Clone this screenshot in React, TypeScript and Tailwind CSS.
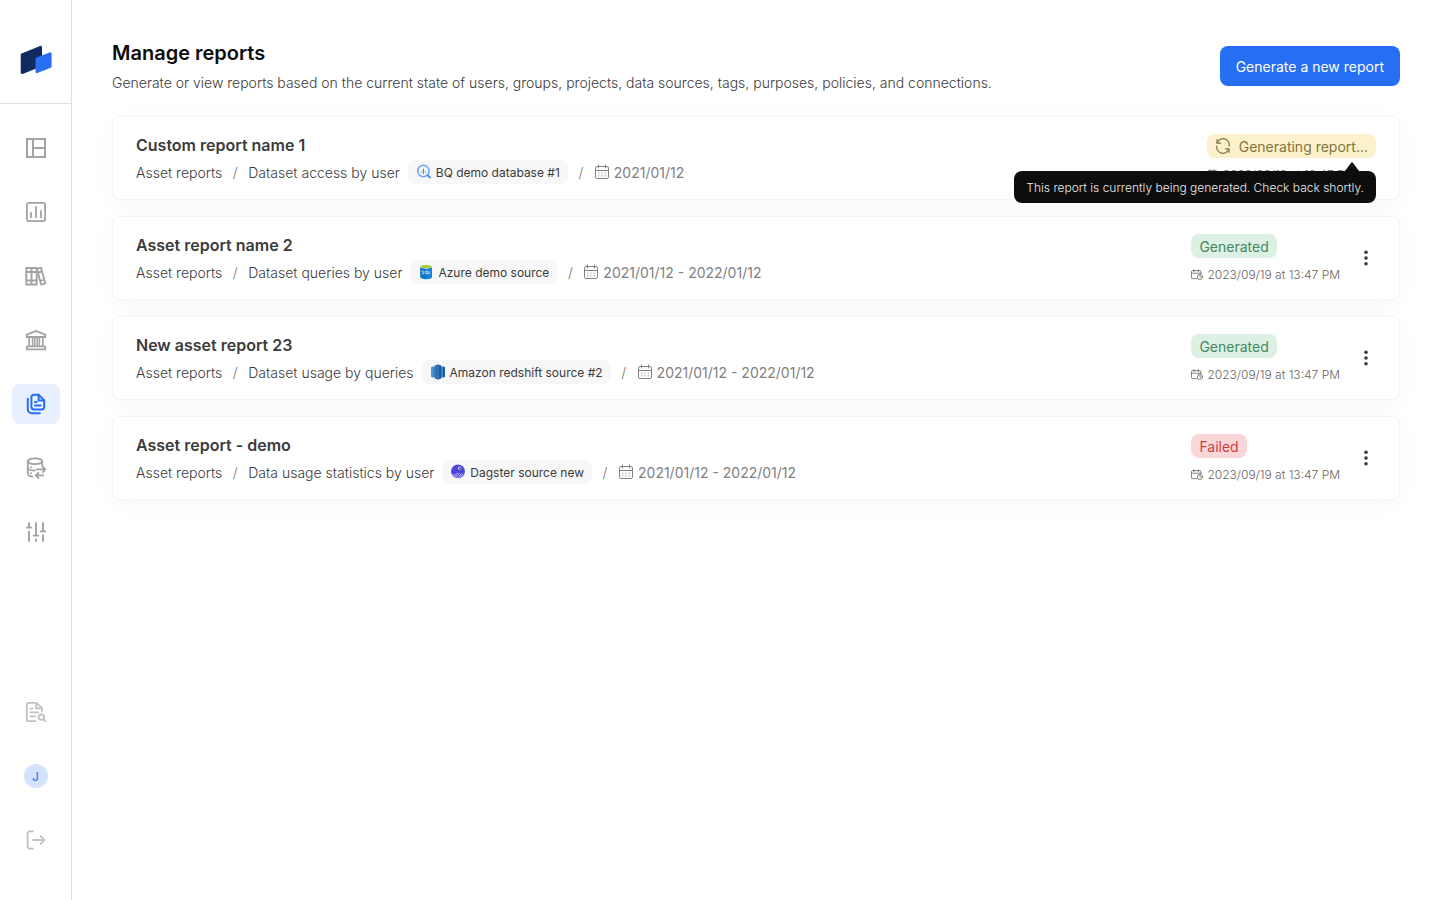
import type { ReactNode } from "react";

type IconProps = { className?: string };

function Svg({ className = "size-6", children, stroke = 1.6 }: { className?: string; children: ReactNode; stroke?: number }) {
  return (
    <svg
      className={className}
      viewBox="0 0 24 24"
      fill="none"
      stroke="currentColor"
      strokeWidth={stroke}
      strokeLinecap="round"
      strokeLinejoin="round"
      aria-hidden="true"
    >
      {children}
    </svg>
  );
}

const DashboardIcon = () => (
  <Svg stroke={2}>
    <path strokeLinejoin="miter" strokeLinecap="butt" d="M3 3h18v18H3zM9 3v18M9 12h12" />
  </Svg>
);

const ChartIcon = () => (
  <Svg stroke={1.8}>
    <rect x="2.9" y="2.9" width="18.2" height="18.2" rx="2" />
    <path d="M7 13v4.2M12 6.8v10.4M17 10.8v6.4" />
  </Svg>
);

const BooksIcon = () => (
  <Svg stroke={1.9}>
    <path d="M2.3 4h10.4v16.5H2.3zM7.5 4v16.5M2.3 8h10.4M2.3 16.5h10.4" />
    <path d="M12.9 4.8 17 3.7l4.4 15.7-4.3 1.2zM13.7 8.6l4.4-1.1M16 16.8l4.4-1.1" />
  </Svg>
);

const BankIcon = () => (
  <Svg stroke={1.8}>
    <path strokeLinejoin="miter" d="M2.8 9V6.6L12 3l9.2 3.6V9zM2.8 18.4h18.4v2.9H2.8z" />
    <path strokeLinecap="butt" strokeWidth="1.6" d="M5.2 9v9.4M8.6 9v9.4M10.8 9v9.4M13.2 9v9.4M15.4 9v9.4M18.8 9v9.4" />
  </Svg>
);

const ReportsIcon = () => (
  <Svg stroke={2}>
    <path d="M14.6 2.8H10a2.6 2.6 0 0 0-2.6 2.6v9.4a2.6 2.6 0 0 0 2.6 2.6h7.6a2.6 2.6 0 0 0 2.6-2.6V8.4z" />
    <path d="M14.6 3v5.4h5.4M11 10h1.6M11 13.4h5.6" />
    <path d="M3.8 6.8v10.4a4 4 0 0 0 4 4h8" />
  </Svg>
);

const DatabaseIcon = () => (
  <Svg stroke={1.8}>
    <ellipse cx="11" cy="5.2" rx="7.2" ry="2.9" />
    <path d="M3.8 5.2v12.6c0 1.5 1.9 2.4 4.4 2.8M18.2 5.2v4.6M3.8 11.6c0 1.6 2.8 2.9 6.6 2.9" />
    <path d="M7 11.2h.1M7 17.2h.1" />
    <path d="M12.4 13.4h9M18.8 10.8l2.6 2.6-2.6 2.6M19.4 19.4h-7.6M14.4 16.8l-2.6 2.6 2.6 2.6" />
  </Svg>
);

const SlidersIcon = () => (
  <Svg stroke={1.9}>
    <path d="M5 3v4.4M2.8 7.6h4.6M5 11.4V21M12 3v12.4M9.6 15.6h4.8M12 19.2V21M19 3v8.2M16.6 11.4h4.8M19 15.2V21" />
  </Svg>
);

const AuditIcon = () => (
  <Svg stroke={1.8}>
    <path d="M11.4 21.2H4.6a1.8 1.8 0 0 1-1.8-1.8V4.6a1.8 1.8 0 0 1 1.8-1.8h8L18 8.2v3.2" />
    <path d="M12.2 3v5.4h5.4M6.4 8.6h2.2M6.4 12.4h7.8M6.4 16.4h5" />
    <circle cx="17.4" cy="17.2" r="2.7" />
    <path d="m19.4 19.2 2 2" />
  </Svg>
);

const LogoutIcon = () => (
  <Svg stroke={1.8}>
    <path d="M9 3.4H5.4a1.8 1.8 0 0 0-1.8 1.8v13.6a1.8 1.8 0 0 0 1.8 1.8H9M9 12h11.4M16.6 8.2l3.8 3.8-3.8 3.8" />
  </Svg>
);

const Logo = () => (
  <svg className="h-8 w-8" viewBox="0 0 32 32" strokeLinejoin="round" strokeWidth="2.8" aria-hidden="true">
    <path d="M2.1 10.9 20.6 3.3v18L2.1 28.6z" fill="#0f2b60" stroke="#0f2b60" />
    <path d="M16.9 14.9 30.2 9.7v12.8l-13.3 5.2z" fill="#266ff3" stroke="#266ff3" />
  </svg>
);

const CalendarIcon = () => (
  <svg className="size-4 shrink-0" viewBox="0 0 16 16" fill="none" stroke="currentColor" strokeLinecap="round" aria-hidden="true">
    <rect x="1.5" y="2.5" width="13" height="12" rx="1.6" />
    <path d="M1.5 6.5h13M4.5 1v3M11.5 1v3" />
    <path strokeWidth="1.2" d="M4.7 9h.1M7.9 9h.1M11.2 9h.1M4.7 11.8h.1M7.9 11.8h.1M11.2 11.8h.1" />
  </svg>
);

const CalendarClockIcon = () => (
  <svg className="size-3 shrink-0" viewBox="0 0 12 12" fill="none" stroke="currentColor" strokeWidth="0.8" strokeLinecap="round" aria-hidden="true">
    <path d="M5.6 9.6H1.5a1 1 0 0 1-1-1V2.6a1 1 0 0 1 1-1h7.4a1 1 0 0 1 1 1v2M.5 4.2h9.4M3 .6v2M7.4.6v2" />
    <circle cx="8.9" cy="7.9" r="2.6" />
    <path d="M8.9 6.6V8h1.2" />
  </svg>
);

const RefreshIcon = () => (
  <svg className="size-4 shrink-0" viewBox="0 0 16 16" fill="none" stroke="currentColor" strokeWidth="1.2" strokeLinecap="round" strokeLinejoin="round" aria-hidden="true">
    <path d="M2 1.6v3.6h3.6M14 14.4v-3.6h-3.6" />
    <path d="M2.2 5A6.2 6.2 0 0 1 14.2 8M13.8 11A6.2 6.2 0 0 1 1.8 8" />
  </svg>
);

const MoreIcon = () => (
  <svg className="size-5" viewBox="0 0 20 20" fill="currentColor" aria-hidden="true">
    <circle cx="10" cy="4.2" r="1.8" />
    <circle cx="10" cy="10" r="1.8" />
    <circle cx="10" cy="15.8" r="1.8" />
  </svg>
);

const BigQueryIcon = () => (
  <svg className="size-4 shrink-0" viewBox="0 0 16 16" fill="none" stroke="#4285f4" strokeLinecap="round" aria-hidden="true">
    <circle cx="7.4" cy="7" r="5.7" strokeWidth="1.5" stroke="#6ea2f7" />
    <path strokeWidth="1.2" d="M7.5 5v4.4" />
    <path strokeWidth="1.2" stroke="#a7c5fa" d="M5.3 7v1.8M9.7 7.6v1.2" />
    <path strokeWidth="2" d="m11.8 11.4 2 2" />
  </svg>
);

const AzureSqlIcon = () => (
  <svg className="size-4 shrink-0" viewBox="0 0 16 16" aria-hidden="true">
    <path d="M2.2 2.7v10.4c0 1.2 2.6 2.1 5.8 2.1s5.8-.9 5.8-2.1V2.7z" fill="#0f74cb" />
    <path d="M8 2.7v12.5c3.2 0 5.8-.9 5.8-2.1V2.7z" fill="#1683d8" />
    <ellipse cx="8" cy="2.7" rx="5.8" ry="2" fill="#e8f2ea" />
    <ellipse cx="8" cy="2.5" rx="5" ry="1.5" fill="#a7cd22" />
    <path
      d="M5.8 7.2C5 6.8 4.2 7 4.2 7.6c0 .9 1.6.7 1.6 1.6 0 .7-1 .9-1.7.4M10.8 6.9v2.8h1.4M8.8 9.2l.7.9"
      fill="none"
      stroke="#fff"
      strokeWidth="0.7"
    />
    <ellipse cx="8.2" cy="8.3" rx="1.2" ry="1.4" fill="none" stroke="#fff" strokeWidth="0.7" />
  </svg>
);

const RedshiftIcon = () => (
  <svg className="size-4 shrink-0" viewBox="0 0 16 16" aria-hidden="true">
    <path d="M1 3.2 3 2.2v11.6l-2-1z" fill="#5294cf" />
    <path d="M15 3.2 13 2.2v11.6l2-1z" fill="#205b99" />
    <path d="M3 2.4h2v11.2H3zM11 2.4h2v11.2h-2z" fill="#3f86c6" />
    <path d="M4.8 1.6 8 .4v15.2l-3.2-1.2z" fill="#2e73b8" />
    <path d="M11.2 1.6 8 .4v15.2l3.2-1.2z" fill="#205b99" />
    <path d="M6.9.8h2.2v14.4H6.9z" fill="#2e73b8" />
  </svg>
);

const DagsterIcon = () => (
  <svg className="size-4 shrink-0" viewBox="0 0 16 16" fill="none" strokeLinecap="round" aria-hidden="true">
    <circle cx="8" cy="7.4" r="6.9" fill="#4f43dd" />
    <path d="M2.2 11c2 .4 4.2-.2 5.6-1.8M4.4 12.8c2-.2 4-1.4 5-3.2M7.2 13.8c1.8-.6 3.2-2 3.8-3.8M10.2 13.4c1-.8 2-2 2.4-3.4" stroke="#dedcf8" strokeWidth="0.8" />
    <circle cx="9.6" cy="4.2" r="1.6" fill="#dedcf8" />
    <circle cx="9.9" cy="4.4" r="0.8" fill="#231f6b" />
  </svg>
);

const navItems = [
  { label: "Dashboard", Icon: DashboardIcon },
  { label: "Analytics", Icon: ChartIcon },
  { label: "Library", Icon: BooksIcon },
  { label: "Policies", Icon: BankIcon },
  { label: "Reports", Icon: ReportsIcon, active: true },
  { label: "Data sources", Icon: DatabaseIcon },
  { label: "Settings", Icon: SlidersIcon },
];

function Sidebar() {
  return (
    <aside className="flex w-18 shrink-0 flex-col border-r border-[#e0e0e0]">
      <div className="flex h-26 items-center justify-center border-b border-[#e0e0e0] pt-4">
        <a href="#home" aria-label="Home">
          <Logo />
        </a>
      </div>
      <nav aria-label="Main" className="flex flex-col items-center gap-6 pt-6 text-[#a3a3a3]">
        {navItems.map(({ label, Icon, active }) => (
          <a
            key={label}
            href="#"
            aria-label={label}
            aria-current={active ? "page" : undefined}
            className={
              active
                ? "flex h-10 w-12 items-center justify-center rounded-lg bg-[#e8f0fe] text-[#266ff3]"
                : "flex h-10 w-12 items-center justify-center rounded-lg"
            }
          >
            <Icon />
          </a>
        ))}
      </nav>
      <div className="mt-auto flex flex-col items-center gap-6 pb-10 text-[#c2c2c2]">
        <a href="#audit" aria-label="Audit log" className="flex h-10 w-12 items-center justify-center">
          <AuditIcon />
        </a>
        <button type="button" aria-label="Account" className="flex h-10 w-12 items-center justify-center">
          <span className="flex size-6 items-center justify-center rounded-full bg-[#d3e2fd] pt-0.5 text-xs font-normal text-[#266ff3]">J</span>
        </button>
        <button type="button" aria-label="Log out" className="flex h-10 w-12 items-center justify-center">
          <LogoutIcon />
        </button>
      </div>
    </aside>
  );
}

type Report = {
  name: string;
  kind: string;
  Source: (props: IconProps) => ReactNode;
  source: string;
  range: string;
  status: "generating" | "generated" | "failed";
};

const reports: Report[] = [
  { name: "Custom report name 1", kind: "Dataset access by user", Source: BigQueryIcon, source: "BQ demo database #1", range: "2021/01/12", status: "generating" },
  { name: "Asset report name 2", kind: "Dataset queries by user", Source: AzureSqlIcon, source: "Azure demo source", range: "2021/01/12 - 2022/01/12", status: "generated" },
  { name: "New asset report 23", kind: "Dataset usage by queries", Source: RedshiftIcon, source: "Amazon redshift source #2", range: "2021/01/12 - 2022/01/12", status: "generated" },
  { name: "Asset report - demo", kind: "Data usage statistics by user", Source: DagsterIcon, source: "Dagster source new", range: "2021/01/12 - 2022/01/12", status: "failed" },
];

function StatusBadge({ status }: { status: Report["status"] }) {
  if (status === "generating") {
    return (
      <div className="relative">
        <span aria-describedby="generating-tip" className="flex h-6 items-center gap-2 rounded-lg bg-[#fbf1cd] px-2 text-sm font-normal text-[#85733a]">
          <RefreshIcon />
          <span className="pt-0.5">Generating report...</span>
        </span>
        <div id="generating-tip" role="tooltip" className="absolute top-full right-0 z-10 mt-[13px] rounded-lg bg-[#0d0d0d] px-3 pt-[9px] pb-[7px] text-xs whitespace-nowrap text-[#ececec]">
          <svg className="absolute right-4 bottom-full h-[9px] w-4" viewBox="0 0 16 9" fill="#0d0d0d" aria-hidden="true">
            <path d="M1 9 7.2.8Q8-.2 8.8.8L15 9z" />
          </svg>
          This report is currently being generated. Check back shortly.
        </div>
      </div>
    );
  }
  return status === "generated" ? (
    <span className="flex h-6 items-center rounded-lg bg-[#dcf0e4] px-2 pt-0.5 text-sm font-normal text-[#468861]">Generated</span>
  ) : (
    <span className="flex h-6 items-center rounded-lg bg-[#f9d7d9] px-2 pt-0.5 text-sm font-normal text-[#cf3d44]">Failed</span>
  );
}

function ReportCard({ name, kind, Source, source, range, status }: Report) {
  return (
    <li className="flex items-center justify-between gap-4 rounded-lg border border-[#f5f5f5] bg-white px-[23px] py-[15px] shadow-[0_4px_24px_rgba(0,0,0,0.03)]">
      <div className="flex flex-col gap-0.5">
        <h2 className="text-base leading-[26px] font-semibold text-[#3b3b3b]">{name}</h2>
        <div className="flex items-center gap-2 text-sm text-[#3b3b3b]">
          <span className="pt-0.5">Asset reports</span>
          <span className="w-[10px] pt-0.5 text-center text-[#757575]">/</span>
          <span className="pt-0.5">{kind}</span>
          <span className="flex h-6 items-center gap-1 rounded-lg bg-[#f7f7f7] px-2 text-xs font-normal">
            <Source />
            <span className="pt-0.5">{source}</span>
          </span>
          <span className="w-[10px] pt-0.5 text-center text-[#757575]">/</span>
          <span className="flex items-center gap-1 font-normal text-[#808080]">
            <CalendarIcon />
            <span className="pt-0.5">{range}</span>
          </span>
        </div>
      </div>
      <div className="flex items-center gap-4">
        <div className="flex flex-col items-start gap-2">
          <StatusBadge status={status} />
          <span className="flex h-4 items-center gap-1 pt-0.5 text-xs text-[#666666]">
            <CalendarClockIcon />
            2023/09/19 at 13:47 PM
          </span>
        </div>
        {status !== "generating" && (
          <button type="button" aria-label={`Actions for ${name}`} className="text-[#3b3b3b]">
            <MoreIcon />
          </button>
        )}
      </div>
    </li>
  );
}

export default function App() {
  return (
    <div className="flex min-h-screen bg-white font-['Inter',sans-serif] font-light">
      <Sidebar />
      <main className="min-w-0 flex-1 px-10 py-10">
        <header className="flex items-center justify-between gap-6">
          <div className="flex flex-col gap-1.5">
            <h1 className="text-xl leading-[26px] font-semibold text-[#0d0d0d]">Manage reports</h1>
            <p className="pt-0.5 text-sm leading-[18px] text-[#3b3b3b]">
              Generate or view reports based on the current state of users, groups, projects, data sources, tags, purposes, policies, and connections.
            </p>
          </div>
          <button type="button" className="h-10 shrink-0 rounded-lg bg-[#266ff3] px-4 pt-0.5 text-sm font-normal text-white">
            Generate a new report
          </button>
        </header>
        <ul className="mt-6 flex flex-col gap-4">
          {reports.map((report) => (
            <ReportCard key={report.name} {...report} />
          ))}
        </ul>
      </main>
    </div>
  );
}
